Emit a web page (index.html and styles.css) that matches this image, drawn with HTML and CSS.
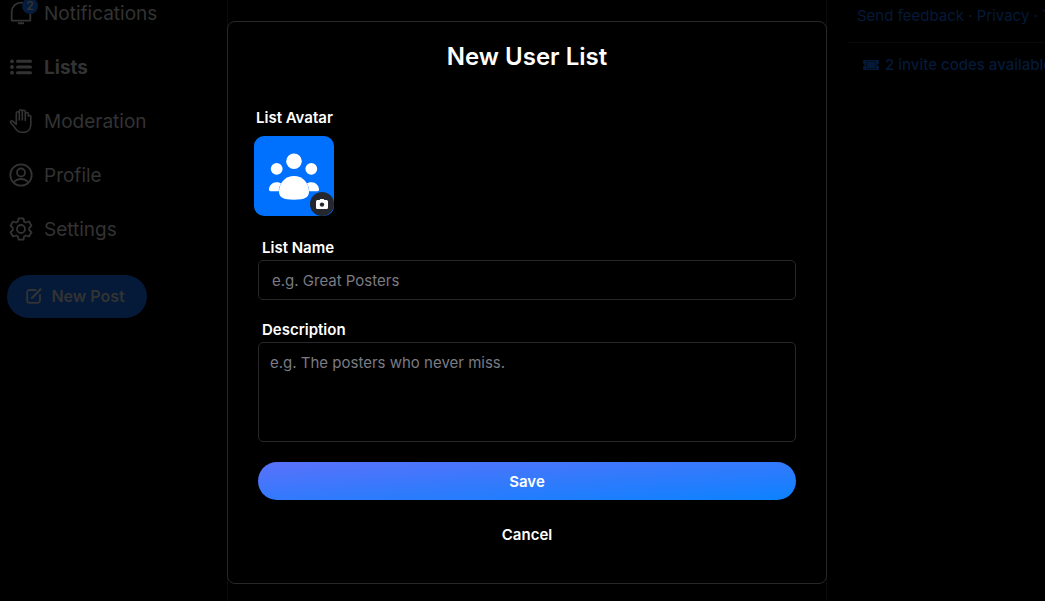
FILE: index.html
```html
<!DOCTYPE html>
<html lang="en">
<head>
    <meta charset="UTF-8">
    <meta name="viewport" content="width=device-width, initial-scale=1.0">
    <title>New User List</title>
    <link rel="stylesheet" href="styles.css">
</head>
<body>
<div class="shell">
    <!-- Left nav -->
    <nav class="sidebar">
        <a class="nav-item" href="#">
            <span class="nav-icon">
                <svg width="24" height="26" viewBox="0 0 24 26" fill="none" stroke="currentColor" stroke-width="1.8"><path d="M2.700 20.600V12a9.300 9.300 0 0 1 18.600 0v8.600z" stroke-linejoin="round"/><path d="M9 23.200h6" stroke-width="2"/></svg>
                <span class="nav-badge">2</span>
            </span>
            Notifications
        </a>
        <a class="nav-item active" href="#">
            <span class="nav-icon">
                <svg width="24" height="24" viewBox="0 0 24 24" fill="none" stroke="currentColor" stroke-width="3" stroke-linecap="round"><path d="M8.500 6.300h13M8.500 12h13M8.500 17.700h13"/><path stroke-width="3.800" d="M3 6.300h.01M3 12h.01M3 17.700h.01"/></svg>
            </span>
            Lists
        </a>
        <a class="nav-item" href="#">
            <span class="nav-icon">
                <svg width="24" height="24" viewBox="0 0 24 24" fill="none" stroke="currentColor" stroke-width="1.600" stroke-linecap="round" stroke-linejoin="round"><path d="M7.300 15.500V4.300a1.500 1.500 0 0 1 3 0V11M10.300 11V2.300a1.500 1.500 0 0 1 3 0V11M13.300 11V2.800a1.500 1.500 0 0 1 3 0V11.500M16.300 11.500V5a1.500 1.500 0 0 1 3 0V7a1.500 1.500 0 0 1 2.500 1.500V15.500c0 5-3.300 7.900-8 7.900-4.300 0-6-1.600-7.600-4.300-1.200-2-3-3.600-4.400-5.300-.9-1.500.7-2.700 2.100-1.700l3.400 3.400"/></svg>
            </span>
            Moderation
        </a>
        <a class="nav-item" href="#">
            <span class="nav-icon">
                <svg width="24" height="24" viewBox="0 0 24 24" fill="none" stroke="currentColor" stroke-width="1.800"><circle cx="12" cy="12" r="10.700"/><circle cx="12" cy="9.500" r="4"/><path d="M4.500 19.500c4-4.700 11-4.700 15 0"/></svg>
            </span>
            Profile
        </a>
        <a class="nav-item" href="#">
            <span class="nav-icon">
                <svg width="24" height="24" viewBox="0 0 24 24" fill="none" stroke="currentColor" stroke-width="1.800" stroke-linejoin="round"><path d="M9.600 1.300h4.800l.7 3.200 1.700 1 3.200-1 2.500 4.200-2.300 2.300v2l2.300 2.300-2.500 4.200-3.200-1-1.700 1-.7 3.200H9.600l-.7-3.200-1.700-1-3.200 1-2.500-4.200L3.800 13v-2L1.500 8.700 4 4.500l3.200 1 1.700-1z"/><circle cx="12" cy="12" r="4"/></svg>
            </span>
            Settings
        </a>
        <button class="new-post" type="button">
            <svg width="16" height="16" viewBox="0 0 16 16" fill="none" stroke="currentColor" stroke-width="1.800" stroke-linecap="round" stroke-linejoin="round"><path d="M9.500 2H3.500A2.300 2.300 0 0 0 1.200 4.300v8.200a2.300 2.300 0 0 0 2.300 2.300h8.200a2.300 2.300 0 0 0 2.300-2.300V7"/><path d="M6 10L14.500 1.200" stroke-width="2.200"/></svg>
            New Post
        </button>
    </nav>

    <main class="content">
        <form class="modal">
            <h1 class="modal-title">New User List</h1>

            <div class="avatar-field">
                <div class="avatar-label" id="avatarLabel">List Avatar</div>
                <button class="avatar" type="button" aria-labelledby="avatarLabel">
                    <svg width="80" height="80" viewBox="0 0 80 80" fill="#fff">
                        <circle cx="40" cy="25.300" r="7.800"/>
                        <circle cx="22.700" cy="32.800" r="5.900"/>
                        <circle cx="57.300" cy="32.800" r="5.900"/>
                        <path d="M15 53.500c0-4 3.300-7.300 7.500-7.300 2 0 3.300.5 4.600 1.400-1.700 2.500-2.300 5-2.300 7.600h-8.300c-1 0-1.500-.6-1.500-1.700zM65 53.500c0-4-3.300-7.300-7.500-7.300-2 0-3.300.5-4.600 1.400 1.700 2.500 2.300 5 2.300 7.600h8.300c1 0 1.500-.6 1.500-1.700z"/>
                        <path d="M40 40c-9 0-15 7.500-15 15.500 0 6 4 8.200 15 8.200s15-2.200 15-8.200C55 47.500 49 40 40 40z"/>
                    </svg>
                    <span class="camera">
                        <svg width="12" height="12" viewBox="0 0 12 12"><path fill="#fff" d="M3.600 1.900L4.400.9h3.200l.8 1h1.800c1 0 1.800.6 1.800 1.600v6c0 1-.7 1.600-1.700 1.600H1.700C.7 11.100 0 10.500 0 9.500v-6c0-1 .8-1.600 1.800-1.600z"/><circle cx="6" cy="6.600" r="2.200" fill="#24272d"/></svg>
                    </span>
                </button>
            </div>

            <div class="form-body">
                <div class="field">
                    <label for="listName">List Name</label>
                    <input id="listName" type="text" placeholder="e.g. Great Posters">
                </div>
                <div class="field">
                    <label for="listDescription">Description</label>
                    <textarea id="listDescription" placeholder="e.g. The posters who never miss."></textarea>
                </div>
                <button class="save" type="submit">Save</button>
                <button class="cancel" type="button">Cancel</button>
            </div>
        </form>
    </main>

    <!-- Right column -->
    <aside class="aside">
        <div class="links">
            <a href="#">Send feedback</a> · <a href="#">Privacy</a> · <a href="#">Terms</a>
        </div>
        <a class="invites" href="#">
            <svg width="16" height="12" viewBox="0 0 16 12"><path fill="currentColor" d="M1.500 1h13A1.500 1.500 0 0 1 16 2.500v2a1.500 1.500 0 0 0 0 3v2a1.500 1.500 0 0 1-1.500 1.500h-13A1.500 1.500 0 0 1 0 9.500v-2a1.500 1.500 0 0 0 0-3v-2A1.500 1.500 0 0 1 1.500 1z"/><path fill="none" stroke="#000" stroke-opacity=".5" d="M3.500 2.500h9v7h-9z"/></svg>
            2 invite codes available
        </a>
    </aside>
</div>
</body>
</html>
```
FILE: styles.css
```css
* { margin: 0; padding: 0; box-sizing: border-box; }
body {
    font-family: Inter, "Liberation Sans", sans-serif;
    font-size: 15px;
    line-height: 20px;
    color: #fff;
    background: #000;
    overflow: hidden;
}
a { color: inherit; text-decoration: none; }
button, input, textarea { font: inherit; color: inherit; }
button { border: none; background: none; cursor: pointer; }

.shell {
    display: grid;
    grid-template-columns: 227px minmax(0, 600px) minmax(0, 1fr);
    min-height: 100vh;
}

/* nav, scrolled up a little behind the dialog */
.sidebar { margin-top: -14px; color: #333; }
.nav-item {
    display: flex;
    align-items: center;
    gap: 11px;
    height: 54px;
    padding-left: 9px;
    font-size: 19px;
    line-height: 25px;
}
.nav-item.active { font-weight: 700; }
.nav-icon { position: relative; display: flex; width: 24px; }
.nav-badge {
    position: absolute;
    top: -2px;
    left: 13px;
    width: 16px;
    border-radius: 8px;
    font-size: 12px;
    font-weight: 600;
    line-height: 16px;
    text-align: center;
    background: #061c3d;
}
.new-post {
    display: flex;
    align-items: center;
    justify-content: center;
    gap: 9px;
    width: 140px;
    height: 43px;
    margin: 19px 0 0 7px;
    padding: 0 3px 1px 0;
    border-radius: 24px;
    font-size: 16px;
    font-weight: 600;
    background: #041a38;
}

.content {
    border: solid #0a0a0b;
    border-width: 0 1px;
}
.modal {
    margin: 21px -1px 0;
    padding: 19px 26px 29px;
    border: 1px solid #28282c;
    border-radius: 8px;
    background: #000;
}
.modal-title {
    margin-bottom: 35px;
    font-size: 24px;
    font-weight: 600;
    line-height: 32px;
    text-align: center;
}
.avatar-field { margin-bottom: 22px; }
.avatar-label { padding-left: 2px; margin-bottom: 8px; font-weight: 600; }
.avatar {
    position: relative;
    display: block;
    width: 80px;
    height: 80px;
    border-radius: 10px;
    background: #0070ff;
}
.avatar svg { display: block; }
.camera {
    position: absolute;
    right: 0;
    bottom: 0;
    display: flex;
    align-items: center;
    justify-content: center;
    width: 24px;
    height: 24px;
    border-radius: 50%;
    background: #24272d;
}

.form-body { padding: 0 4px; }
.field { margin-bottom: 20px; }
.field label {
    display: block;
    margin-bottom: 2px;
    padding-left: 4px;
    font-weight: 600;
}
.field input, .field textarea {
    display: block;
    width: 100%;
    border: 1px solid #28282c;
    border-radius: 5px;
    outline: none;
    background: #000;
}
.field input { height: 40px; padding: 0 13px; }
.field textarea { height: 100px; padding: 10px 11px; resize: none; }
.field ::placeholder { color: #7b7b83; opacity: 1; }
.save, .cancel {
    display: block;
    width: 100%;
    height: 38px;
    border-radius: 24px;
    font-weight: 600;
}
.save { padding-top: 1px; background: linear-gradient(to bottom right, #5a71fa, #0085ff 115%); }
.cancel { margin-top: 16px; }

.aside {
    padding-left: 20px;
    overflow: hidden;
    white-space: nowrap;
    color: #041a38;
}
.links { padding: 6px 10px 16px; border-bottom: 1px solid #0a0a0b; }
.invites {
    display: flex;
    align-items: center;
    gap: 6px;
    padding: 12px 16px;
    font-weight: 500;
}
.invites svg { flex-shrink: 0; }
```
